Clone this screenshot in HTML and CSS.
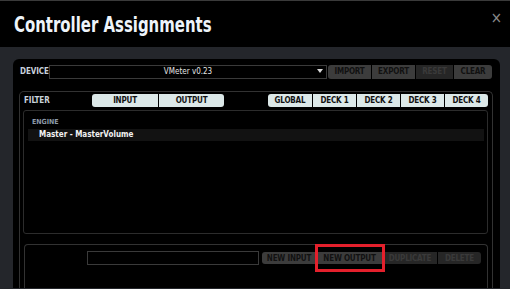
FILE: index.html
```html
<!DOCTYPE html>
<html lang="en">
<head>
  <meta charset="UTF-8" />
  <title>Controller Assignments</title>
  <link rel="stylesheet" href="styles.css">
</head>
<body>
  <header class="titlebar">
    <h1>Controller Assignments</h1>
    <span class="close">&times;</span>
  </header>

  <div class="dialog">
    <div class="panel">
      <div class="device-row">
        <span class="label">DEVICE</span>
        <div class="select">
          <span>VMeter v0.23</span>
          <span class="arrow"></span>
        </div>
        <div class="btn-group dark">
          <button>IMPORT</button>
          <button>EXPORT</button>
          <button class="off">RESET</button>
          <button>CLEAR</button>
        </div>
      </div>

      <div class="filter">
        <div class="filter-row">
          <span class="label">FILTER</span>
          <div class="btn-group light io">
            <button>INPUT</button>
            <button>OUTPUT</button>
          </div>
          <div class="btn-group light decks">
            <button class="global">GLOBAL</button>
            <button>DECK 1</button>
            <button>DECK 2</button>
            <button>DECK 3</button>
            <button>DECK 4</button>
          </div>
        </div>

        <div class="list">
          <div class="group-title">ENGINE</div>
          <div class="item">Master - MasterVolume</div>
        </div>

        <div class="actions">
          <div class="text-input"></div>
          <div class="btn-group dark">
            <button class="new-in">NEW INPUT</button>
            <button class="new-out">NEW OUTPUT<span class="mark"></span></button>
            <button class="off dup">DUPLICATE</button>
            <button class="off del">DELETE</button>
          </div>
        </div>
      </div>
    </div>
  </div>
</body>
</html>
```

FILE: styles.css
```css
:root {
  --bg-color: #24262b;
  --line-color: #323232;
  --label-color: #c9d2dc;
  --light-btn: #dce8e8;
  --dark-btn: #3c3c3c;
  --off-btn: #262626;
}

* {
  margin: 0;
  padding: 0;
  box-sizing: border-box;
  font-family: "DejaVu Sans Condensed", "DejaVu Sans", sans-serif;
  font-stretch: condensed;
}

html, body {
  width: 510px;
  height: 289px;
  overflow: hidden;
  background-color: var(--bg-color);
}

.titlebar {
  height: 47px;
  background: #000;
  border-top: 1px solid #3a3a3a;
  display: flex;
  justify-content: space-between;
  padding: 11px 8px 0 14px;
}

.titlebar h1 {
  color: #eef4fa;
  font-size: 21px;
  font-weight: bold;
  line-height: 26px;
  transform: scaleX(0.79);
  transform-origin: left center;
  white-space: nowrap;
}

.close {
  color: #8a8a8a;
  font-family: "DejaVu Sans", sans-serif;
  font-size: 15px;
  line-height: 12px;
}

.dialog {
  padding: 12px 10px 0 13px;
  height: 241px;
}

.panel {
  height: 100%;
  background: #000;
  border-radius: 6px 6px 0 0;
  padding: 5px 7px 0 6px;
  display: flex;
  flex-direction: column;
}

.label {
  color: var(--label-color);
  font-size: 8px;
  font-weight: bold;
  letter-spacing: -0.1px;
}

.device-row {
  display: flex;
  align-items: center;
  height: 15px;
  padding-left: 1px;
}

.device-row .label {
  width: 29px;
}

.select {
  width: 278px;
  height: 14px;
  border: 1px solid #3a3a3a;
  color: #e6e6e6;
  font-size: 8px;
  line-height: 12px;
  text-align: center;
  position: relative;
}

.arrow {
  position: absolute;
  right: 3px;
  top: 3px;
  border-left: 3px solid transparent;
  border-right: 3px solid transparent;
  border-top: 4px solid #d8d8d8;
}

.btn-group {
  display: flex;
  gap: 1px;
}

.btn-group button {
  border: none;
  font-size: 8px;
  font-weight: bold;
  letter-spacing: -0.2px;
  color: #111;
  text-align: center;
  white-space: nowrap;
}

.btn-group button:first-child { border-radius: 3px 0 0 3px; }
.btn-group button:last-child { border-radius: 0 3px 3px 0; }

.dark button {
  background: var(--dark-btn);
  height: 14px;
}

.dark button.off {
  background: var(--off-btn);
  color: #3a3a3a;
}

.device-row .dark {
  margin-left: 1px;
}

.device-row .dark button { width: 43px; }
.device-row .dark button.off { width: 37px; }
.device-row .dark button:last-child { width: 38px; }

.filter {
  margin-top: 12px;
  flex: 1;
  border: 1px solid var(--line-color);
  border-bottom: none;
  border-radius: 5px 5px 0 0;
  padding: 2px 4px 0 3px;
  display: flex;
  flex-direction: column;
}

.filter-row {
  display: flex;
  align-items: center;
  height: 13px;
}

.filter-row .label {
  width: 69px;
  padding-left: 1px;
}

.light button {
  background: var(--light-btn);
  height: 13px;
}

.io button { width: 66px; }
.io button:last-child { width: 65px; }

.decks {
  margin-left: auto;
}

.decks button { width: 43px; }
.decks button.global { width: 44px; }

.list {
  margin-top: 3px;
  height: 124px;
  border: 1px solid #2c2c2c;
  border-radius: 3px;
  padding: 7px 3px 0 4px;
}

.group-title {
  color: #8d9aa8;
  font-size: 7px;
  font-weight: bold;
  padding-left: 4px;
  height: 11px;
}

.item {
  background: #121212;
  color: #f2f2f2;
  font-size: 8px;
  font-weight: bold;
  height: 12px;
  line-height: 12px;
  padding-left: 11px;
}

.actions {
  margin-top: 10px;
  margin-left: 1px;
  flex: 1;
  border: 1px solid var(--line-color);
  border-bottom: none;
  border-radius: 4px 4px 0 0;
  display: flex;
  align-items: flex-start;
  padding: 6px 6px 0 62px;
}

.text-input {
  width: 174px;
  height: 14px;
  border: 1px solid #3a3a3a;
  margin-right: 3px;
}

.actions .dark {
  margin-top: 1px;
}

.actions .dark button { height: 12px; }
.new-in { width: 54px; }
.new-out { width: 65px; position: relative; }
.dup { width: 54px; }
.del { width: 43px; }

/* annotation box */
.mark {
  position: absolute;
  left: -2px;
  right: -3px;
  top: -8px;
  bottom: -8px;
  border: 3px solid #e4202c;
}
```
